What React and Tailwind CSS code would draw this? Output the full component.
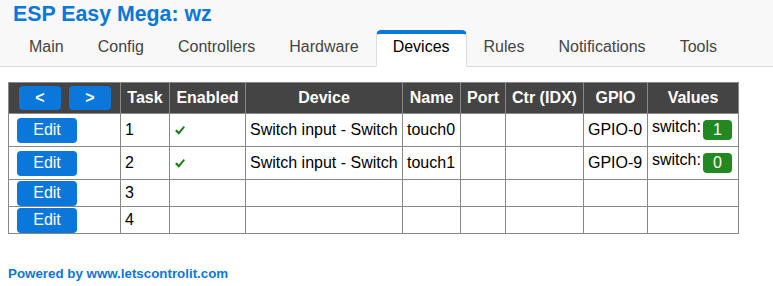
import React from "react";

const BLUE = "bg-[#0b77da]";

function Check() {
  return (
    <svg width="10" height="9" viewBox="0 0 10 9" className="ml-[1px]">
      <path d="M0 4.9 L1.7 3.5 L3.8 5.5 L8.6 0 L10 1.2 L3.9 8.7 Z" fill="#1c7d1c" />
    </svg>
  );
}

const tabs = ["Main", "Config", "Controllers", "Hardware", "Devices", "Rules", "Notifications", "Tools"];

const rows = [
  { task: "1", enabled: true, device: "Switch input - Switch", name: "touch0", gpio: "GPIO-0", val: "1", h: "h-[33px]" },
  { task: "2", enabled: true, device: "Switch input - Switch", name: "touch1", gpio: "GPIO-9", val: "0", h: "h-[33px]" },
  { task: "3", h: "h-[27px]" },
  { task: "4", h: "h-[27px]" },
];

const headers = ["Task", "Enabled", "Device", "Name", "Port", "Ctr (IDX)", "GPIO", "Values"];

export default function App() {
  const cell = "border-r border-b border-[#888] flex items-center px-[4px] text-black";
  return (
    <div className="w-[773px] min-h-[286px] bg-white font-['Liberation_Sans',Arial,sans-serif] text-[16px]">
      <div className="h-[67px] bg-[#f8f8f8] border-b border-[#ddd]">
        <div className="pt-[2px] pl-[13px] text-[21.33px] leading-[24px] font-bold text-[#0b77da]">
          ESP Easy Mega: wz
        </div>
        <div className="flex pl-[12px] mt-[4px]">
          {tabs.map((t) =>
            t === "Devices" ? (
              <div
                key={t}
                className="px-4 pt-1 pb-[10px] leading-[18px] border-x border-t-4 border-b rounded-t-[5px] bg-white text-black border-t-[#0b77da] border-x-[#ddd] border-b-white whitespace-nowrap"
              >
                {t}
              </div>
            ) : (
              <div
                key={t}
                className="px-4 pt-1 pb-[10px] leading-[18px] border-x border-t-4 border-b border-transparent text-[#444] whitespace-nowrap"
              >
                {t}
              </div>
            )
          )}
        </div>
      </div>

      <div className="ml-2 mt-[15px] w-[731px] border-l border-t border-[#888] grid grid-cols-[112px_49px_76px_157px_58px_45px_78px_64px_91px]">
        <div className="h-[31px] bg-[#444] border-r border-b border-[#888] flex items-center pl-[10px] gap-[8px]">
          <div className={`w-[42px] h-[24px] rounded-[4px] ${BLUE} text-white font-bold flex items-center justify-center leading-[18px]`}>&lt;</div>
          <div className={`w-[42px] h-[24px] rounded-[4px] ${BLUE} text-white font-bold flex items-center justify-center leading-[18px]`}>&gt;</div>
        </div>
        {headers.map((h) => (
          <div
            key={h}
            className="h-[31px] bg-[#444] text-white font-bold border-r border-b border-[#888] flex items-center justify-center leading-[18px] whitespace-nowrap"
          >
            {h}
          </div>
        ))}

        {rows.map((r) => (
          <React.Fragment key={r.task}>
            <div className={`${r.h} ${cell}`}>
              <div className={`ml-[4px] w-[60px] h-[25px] rounded-[4px] ${BLUE} text-white flex items-center justify-center leading-[18px]`}>
                Edit
              </div>
            </div>
            <div className={`${r.h} ${cell} leading-[18px]`}>{r.task}</div>
            <div className={`${r.h} ${cell}`}>{r.enabled ? <Check /> : null}</div>
            <div className={`${r.h} ${cell} leading-[18px] whitespace-nowrap`}>{r.device || ""}</div>
            <div className={`${r.h} ${cell} leading-[18px]`}>{r.name || ""}</div>
            <div className={`${r.h} ${cell}`}></div>
            <div className={`${r.h} ${cell}`}></div>
            <div className={`${r.h} ${cell} leading-[18px] whitespace-nowrap`}>{r.gpio || ""}</div>
            <div className={`${r.h} border-r border-b border-[#888] flex items-start px-[4px] pt-[4px] text-black`}>
              {r.val ? (
                <>
                  <span className="leading-[18px]">switch:</span>
                  <span className="ml-auto mt-[2px] mr-[2px] px-[10px] py-[1px] leading-[18px] rounded-[4px] bg-[#228822] text-white">
                    {r.val}
                  </span>
                </>
              ) : null}
            </div>
          </React.Fragment>
        ))}
      </div>

      <div className="ml-2 mt-[32px] text-[13.33px] leading-[15px] font-bold text-[#0b77da]">
        Powered by www.letscontrolit.com
      </div>
    </div>
  );
}
